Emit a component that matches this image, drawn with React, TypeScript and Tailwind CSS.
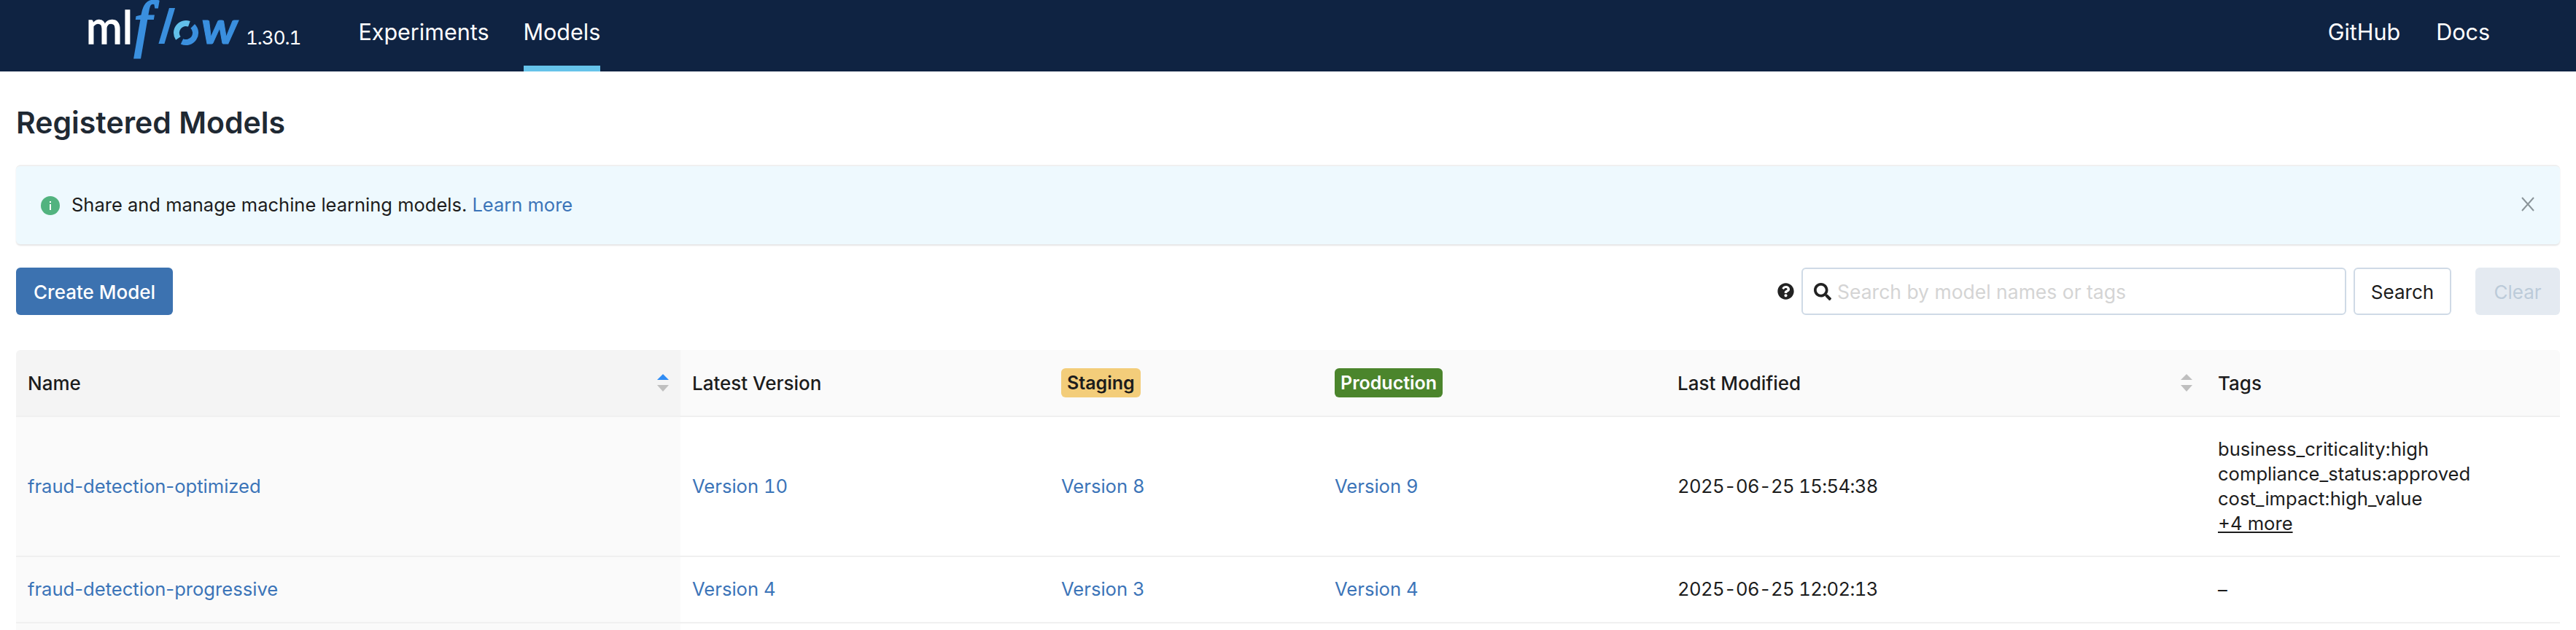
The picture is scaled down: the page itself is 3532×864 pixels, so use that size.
import { FaSearch, FaQuestionCircle } from "react-icons/fa";

function Logo() {
  return (
    <svg width="212" height="98" viewBox="0 0 212 98" className="block shrink-0">
      <text x="0" y="60" fill="#ffffff" stroke="#ffffff" strokeWidth="1.5" fontFamily="Lato, sans-serif" fontSize="62" textLength="64" lengthAdjust="spacingAndGlyphs">ml</text>
      <text x="66" y="61" fill="#3a8fde" stroke="#3a8fde" strokeWidth="3" fontFamily="Liberation Serif, serif" fontStyle="italic" fontSize="84">f</text>
      <text transform="translate(98,60) skewX(-10)" fill="#3a8fde" fontFamily="Lato, sans-serif" fontStyle="italic" fontWeight="700" fontSize="66">l</text>
      <path d="M126.35 52.5A13 13 0 0 1 141.4 32.8" fill="none" stroke="#62c0ea" strokeWidth="8" />
      <path d="M146.2 35.8A13 13 0 0 1 131.5 56.8" fill="none" stroke="#3a8fde" strokeWidth="8" />
      <text x="158" y="60" fill="#3a8fde" stroke="#3a8fde" strokeWidth="1" fontFamily="Lato, sans-serif" fontStyle="italic" fontWeight="700" fontSize="62" textLength="50" lengthAdjust="spacingAndGlyphs">w</text>
    </svg>
  );
}

function SortCarets({ active }: { active?: boolean }) {
  return (
    <svg width="16" height="24" viewBox="0 0 16 24" className="shrink-0">
      <polygon points="8,0 16,8 0,8" fill={active ? "#2f8cf4" : "#bfbfbf"} />
      <polygon points="8,24 16,15 0,15" fill="#bfbfbf" />
    </svg>
  );
}

function VersionLink({ children }: { children: React.ReactNode }) {
  return <a className="text-[#3b74b8]">{children}</a>;
}

const rows = [
  {
    name: "fraud-detection-optimized",
    latest: "Version 10",
    staging: "Version 8",
    production: "Version 9",
    modified: "2025-06-25 15:54:38",
    tags: ["business_criticality:high", "compliance_status:approved", "cost_impact:high_value"],
    more: "+4 more",
    height: "h-[192px]",
  },
  {
    name: "fraud-detection-progressive",
    latest: "Version 4",
    staging: "Version 3",
    production: "Version 4",
    modified: "2025-06-25 12:02:13",
    tags: [],
    more: "",
    height: "h-[91px]",
  },
];

export default function App() {
  return (
    <div className="h-[864px] overflow-hidden bg-white font-[Inter,sans-serif] text-[#1c1c1c]">
      {/* Header */}
      <header className="flex h-[98px] items-stretch justify-between bg-[#0f2342] text-white">
        <div className="flex items-stretch pl-[118px]">
          <Logo />
          <span className="ml-[7px] mt-[38px] text-[26px] leading-[28px] tracking-[-1px] tabular-nums">1.30.1</span>
          <nav className="ml-[79px] flex gap-[47px] text-[30.5px]">
            <a className="flex items-center pb-[10px]">Experiments</a>
            <a className="flex items-center border-b-[8px] border-[#66c3ea] pb-[2px]">Models</a>
          </nav>
        </div>
        <div className="flex gap-[49px] pr-[118px] text-[30.5px]">
          <a className="flex items-center pb-[10px]">GitHub</a>
          <a className="flex items-center pb-[10px]">Docs</a>
        </div>
      </header>

      <main className="px-[22px]">
        <h1 className="mt-[46px] text-[41px] font-semibold leading-[48px] text-[#1f2933]">Registered Models</h1>

        {/* Banner */}
        <div className="mt-[34px] flex h-[109px] items-center justify-between rounded-[6px] border-t-2 border-[#f0f0f0] bg-[#eef9fe] pl-[34px] pr-[34px] shadow-[0_2px_2px_rgba(0,0,0,0.1)]">
          <div className="flex items-center gap-[16px] text-[25.5px]">
            <svg width="26" height="26" viewBox="0 0 26 26">
              <circle cx="13" cy="13" r="13" fill="#52b37f" />
              <rect x="12" y="11" width="2" height="8" fill="#ffffff" />
              <rect x="12" y="7" width="2" height="2" fill="#ffffff" />
            </svg>
            <span>
              Share and manage machine learning models. <a className="text-[#3b74b8]">Learn more</a>
            </span>
          </div>
          <svg width="20" height="20" viewBox="0 0 20 20" className="mb-[4px]">
            <path d="M2 1 18 19M18 1 2 19" stroke="#8a9499" strokeWidth="2" fill="none" />
          </svg>
        </div>

        {/* Toolbar */}
        <div className="mt-[32px] flex h-[65px] items-center justify-between">
          <button className="h-full rounded-[6px] bg-[#3c72b0] px-[24px] pt-[1px] text-[26px] font-medium text-white">Create Model</button>
          <div className="flex h-full items-center">
            <FaQuestionCircle className="mr-[10px] text-[23px] text-[#222222]" />
            <div className="flex h-full w-[747px] items-center rounded-[6px] border-2 border-[#cfdae6] pl-[15px]">
              <FaSearch className="text-[24px] text-[#222222]" />
              <span className="ml-[8px] pt-[2px] text-[26.5px] text-[#d4d4d4]">Search by model names or tags</span>
            </div>
            <button className="ml-[10px] h-full w-[134px] rounded-[6px] border-2 border-[#cfdae6] pt-[1px] text-[26px]">Search</button>
            <button className="ml-[33px] h-full w-[116px] rounded-[6px] bg-[#e4eaf1] pt-[1px] text-[26px] text-[#bccbd9]">Clear</button>
          </div>
        </div>

        {/* Table */}
        <table className="mt-[48px] w-full table-fixed border-collapse text-left text-[25.6px]">
          <colgroup>
            <col className="w-[911px]" />
            <col className="w-[506px]" />
            <col className="w-[375px]" />
            <col className="w-[470px]" />
            <col className="w-[741px]" />
            <col />
          </colgroup>
          <thead>
            <tr className="h-[91px] border-b-2 border-[#f0f0f0] bg-[#fafafa] text-[26px] font-medium">
              <th className="rounded-tl-[6px] bg-[#f4f4f4] pl-[16px] pr-[16px] font-medium">
                <div className="flex items-center justify-between">
                  Name
                  <SortCarets active />
                </div>
              </th>
              <th className="pl-[16px] font-medium">Latest Version</th>
              <th className="pl-[16px] font-medium">
                <span className="inline-block h-[40px] rounded-[6px] bg-[#f3cd7a] px-[8px] text-[25px] font-semibold leading-[40px]">Staging</span>
              </th>
              <th className="pl-[16px] font-medium">
                <span className="inline-block h-[40px] rounded-[6px] bg-[#4b852c] px-[8px] text-[25px] font-semibold leading-[40px] text-white">Production</span>
              </th>
              <th className="pl-[16px] pr-[19px] font-medium">
                <div className="flex items-center justify-between">
                  Last Modified
                  <SortCarets />
                </div>
              </th>
              <th className="rounded-tr-[6px] pl-[16px] font-medium">Tags</th>
            </tr>
          </thead>
          <tbody>
            {rows.map((r) => (
              <tr key={r.name} className={`${r.height} border-b-2 border-[#f0f0f0]`}>
                <td className="bg-[#fafafa] pl-[16px]">
                  <VersionLink>{r.name}</VersionLink>
                </td>
                <td className="pl-[16px] tabular-nums">
                  <VersionLink>{r.latest}</VersionLink>
                </td>
                <td className="pl-[16px] tabular-nums">
                  <VersionLink>{r.staging}</VersionLink>
                </td>
                <td className="pl-[16px] tabular-nums">
                  <VersionLink>{r.production}</VersionLink>
                </td>
                <td className="pl-[16px] tracking-[-0.6px] tabular-nums">{r.modified}</td>
                <td className="pl-[16px] leading-[34px]">
                  {r.tags.length > 0 ? (
                    <>
                      {r.tags.map((t) => (
                        <div key={t}>{t}</div>
                      ))}
                      <a className="underline">{r.more}</a>
                    </>
                  ) : (
                    "–"
                  )}
                </td>
              </tr>
            ))}
            <tr className="h-[91px]">
              <td className="bg-[#fafafa]" />
              <td colSpan={5} />
            </tr>
          </tbody>
        </table>
      </main>
    </div>
  );
}
